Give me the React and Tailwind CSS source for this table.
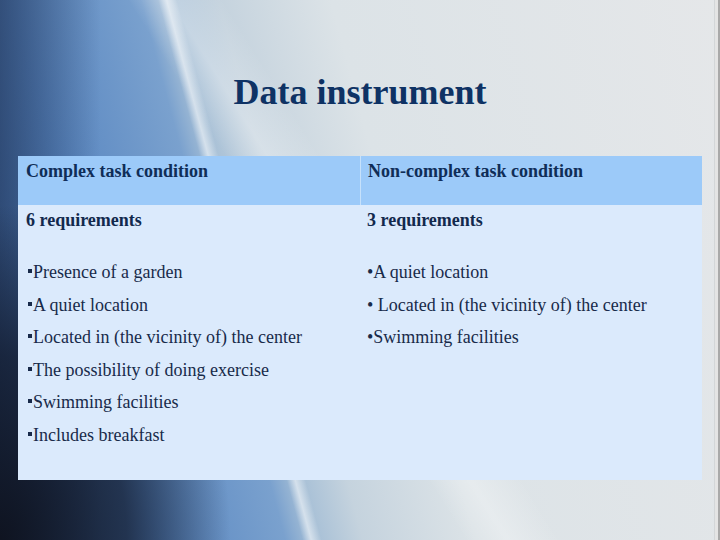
const complexItems = [
  "Presence of a garden",
  "A quiet location",
  "Located in (the vicinity of) the center",
  "The possibility of doing exercise",
  "Swimming facilities",
  "Includes breakfast",
];

const simpleItems = [
  "•A quiet location",
  "• Located in (the vicinity of) the center",
  "•Swimming facilities",
];

export default function App() {
  return (
    <div className="w-[720px] h-[540px] overflow-hidden font-['Liberation_Serif','Times_New_Roman',serif] bg-[linear-gradient(to_right,transparent_714px,#d3d6d8_714px,#d3d6d8_715px,#e4e4e4_715px,#e4e4e4_718px,#a9a9a9_718px),linear-gradient(75deg,transparent_35%,rgba(255,255,255,0.55)_36%,transparent_37.2%),linear-gradient(58deg,transparent_44%,rgba(255,255,255,0.3)_48%,transparent_53%),radial-gradient(ellipse_32%_62%_at_0%_100%,rgba(14,18,30,0.97)_0%,rgba(18,26,44,0.75)_55%,transparent_100%),linear-gradient(to_right,rgba(22,36,66,0.55)_0%,transparent_14%),linear-gradient(75deg,#3f6ca9_0%,#5886c1_18%,#7aa1ce_33%,#a6bfd6_36.3%,#c5d3de_42%,#dce3e7_55%,#e5e7e9_100%)]">
      <h1 className="pt-[74px] text-center text-[36px] leading-[36px] font-bold text-[#0e3264]">
        Data instrument
      </h1>

      <div className="mt-[46px] ml-[18px] w-[684px]">
        {/* header row */}
        <div className="grid grid-cols-2 h-[49px] bg-[#9ccaf9] text-[18px] leading-[20px] font-bold text-[#0f2d57]">
          <div className="pt-[5px] px-[8px]">Complex task condition</div>
          <div className="pt-[5px] px-[7px] border-l border-[#c6e1fb]">Non-complex task condition</div>
        </div>

        {/* body row */}
        <div className="grid grid-cols-2 h-[275px] bg-[#dbeafc] text-[18px] text-[#182a4a]">
          <div className="px-[8px]">
            <p className="font-bold leading-[30px] text-[#12294d]">6 requirements</p>
            <ul className="mt-[21px]">
              {complexItems.map((item) => (
                <li key={item} className="leading-[32.5px]">
                  <span className="inline-block w-[4px] h-[4px] mb-[5px] ml-[2px] mr-[1px] bg-[#182a4a]" />
                  {item}
                </li>
              ))}
            </ul>
          </div>
          <div className="px-[7px]">
            <p className="font-bold leading-[30px] text-[#12294d]">3 requirements</p>
            <ul className="mt-[21px]">
              {simpleItems.map((item) => (
                <li key={item} className="leading-[32.5px]">
                  {item}
                </li>
              ))}
            </ul>
          </div>
        </div>
      </div>
    </div>
  );
}
